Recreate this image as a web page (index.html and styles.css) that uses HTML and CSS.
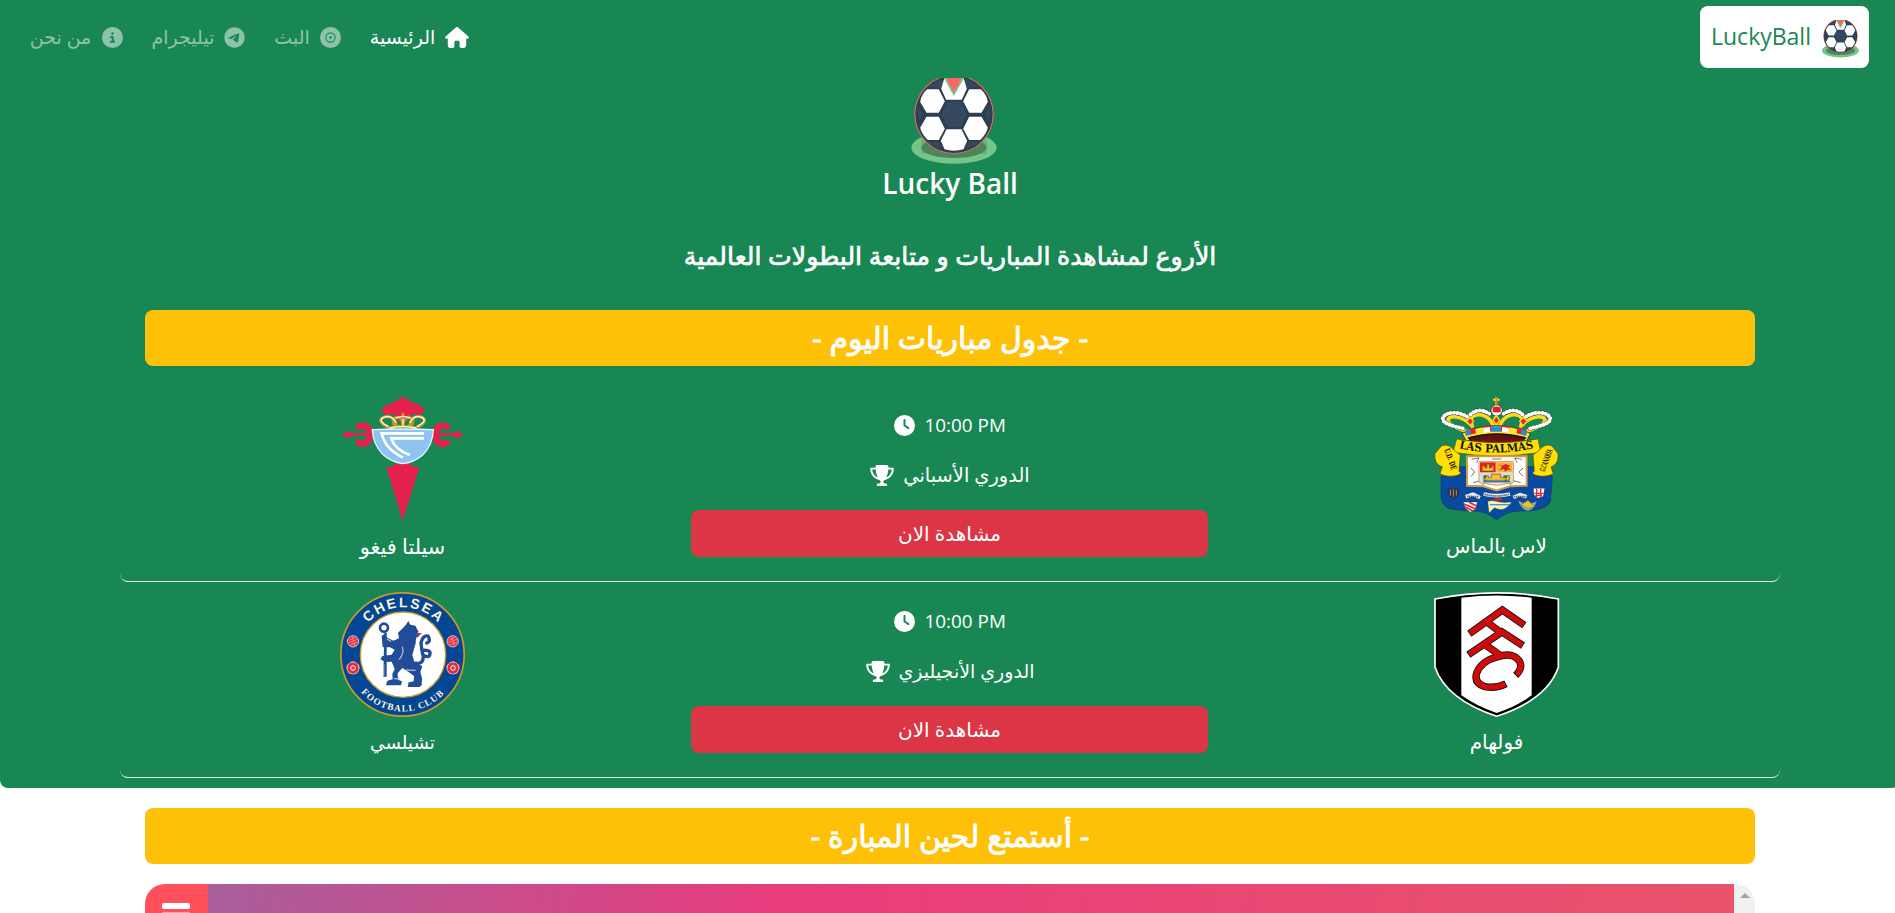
FILE: index.html
```html
<!DOCTYPE html>
<html lang="ar">
<head>
<meta charset="utf-8">
<title>LuckyBall</title>
<link rel="stylesheet" href="styles.css">
</head>
<body>
<svg class="defs" aria-hidden="true">
  <symbol id="ball" viewBox="155 54 257 258">
    <ellipse cx="283.500" cy="263" rx="128" ry="48.500" fill="#74c587"/>
    <ellipse cx="283.500" cy="263" rx="98" ry="31" fill="#4f8359"/>
    <circle cx="283.500" cy="163" r="119" fill="#ff6464"/>
    <path d="M186 230 Q283 300 381 230 L381 282 H186Z" fill="#4f8359" opacity=".3"/>
    <circle cx="283.500" cy="163" r="116" fill="#2c3e50"/>
    <path d="M177 140 190 163 177 187ZM390 140 377 163 390 187ZM205 80 243 58 252 66 241 84ZM362 80 324 58 315 66 326 84ZM207 246 241 246 248 266Q225 262 207 246ZM360 246 326 246 319 266Q342 262 360 246Z" fill="#34495e"/>
    <g fill="#fff">
      <path d="M203 88H238L256 124 238 158H201L182 125Q186 103 203 88ZM364 88H329L311 124 329 158H366L385 125Q381 103 364 88ZM201 170H238L256 206 238 240H205Q187 223 182 203ZM366 170H329L311 206 329 240H362Q380 223 385 203ZM261 208H306L323 242 312 268Q283 276 255 268L244 242ZM254 56H313L322 86 307 119H260L245 86Z"/>
    </g>
    <path d="M264 125H303L323 164 303 202H264L245 164Z" fill="#34495e"/>
    <path d="M250 48H317L283 108Z" fill="#74c587"/>
    <path d="M257 48H310L283 97Z" fill="#ff6464"/>
  </symbol>
  <symbol id="clock" viewBox="0 0 512 512"><path d="M256 0a256 256 0 1 1 0 512A256 256 0 1 1 256 0zM232 120V256c0 8 4 15.500 10.700 20l96 64c11 7.400 25.900 4.400 33.300-6.700s4.400-25.900-6.700-33.300L280 243.200V120c0-13.300-10.700-24-24-24s-24 10.700-24 24z"/></symbol>
  <symbol id="trophy" viewBox="0 0 576 512"><path d="M400 0H176c-26.500 0-48.100 21.800-47.100 48.200.2 5.300.4 10.600.7 15.800H24C10.700 64 0 74.700 0 88c0 92.600 33.500 157 78.500 200.700 44.300 43.100 98.300 64.800 138.100 75.800 23.400 6.500 39.400 26 39.400 45.600 0 20.900-17 37.900-37.900 37.900H192c-17.700 0-32 14.300-32 32s14.300 32 32 32H384c17.700 0 32-14.300 32-32s-14.300-32-32-32H357.900C337 448 320 431 320 410.100c0-19.600 15.900-39.200 39.400-45.600 39.900-11 93.900-32.700 138.200-75.800C542.500 245 576 180.600 576 88c0-13.300-10.700-24-24-24H446.400c.3-5.200.5-10.400.7-15.800C448.100 21.800 426.500 0 400 0zM48.900 112h84.400c9.100 90.100 29.200 150.300 51.900 190.600-24.900-11-50.800-26.500-73.200-48.300-32-31.100-58-76-63-142.300zM464.100 254.300c-22.400 21.800-48.300 37.300-73.200 48.300 22.700-40.300 42.800-100.500 51.900-190.600h84.400c-5.100 66.300-31.100 111.200-63 142.300z"/></symbol>
</svg>

<header class="hero">
  <nav class="nav">
    <ul class="menu">
      <li class="item about"><span class="label" dir="rtl">من نحن</span>
        <svg class="ico" viewBox="0 0 512 512"><path d="M256 512A256 256 0 1 0 256 0a256 256 0 1 0 0 512zM216 336h24V272H216c-13.300 0-24-10.700-24-24s10.700-24 24-24h48c13.300 0 24 10.700 24 24v88h8c13.300 0 24 10.700 24 24s-10.700 24-24 24H216c-13.300 0-24-10.700-24-24s10.700-24 24-24zm40-208a32 32 0 1 1 0 64 32 32 0 1 1 0-64z"/></svg></li>
      <li class="item tele"><span class="label" dir="rtl">تيليجرام</span>
        <svg class="ico" viewBox="0 0 496 512"><path d="M248 8C111 8 0 119 0 256S111 504 248 504 496 393 496 256 385 8 248 8zM363 176.700c-3.700 39.200-19.900 134.400-28.100 178.300-3.500 18.600-10.300 24.800-16.900 25.400-14.400 1.300-25.300-9.500-39.300-18.700-21.800-14.300-34.200-23.200-55.300-37.200-24.500-16.100-8.600-25 5.300-39.500 3.700-3.800 67.100-61.500 68.300-66.700.2-.7.300-3.100-1.200-4.400s-3.600-.8-5.100-.5q-3.300.7-104.600 69.100-14.800 10.200-26.900 9.900c-8.900-.2-25.900-5-38.600-9.100-15.500-5-27.900-7.700-26.800-16.300q.8-6.700 18.500-13.700 108.400-47.200 144.600-62.300c68.900-28.600 83.200-33.600 92.500-33.800 2.100 0 6.600.5 9.600 2.900a10.500 10.500 0 0 1 3.500 6.700A43.800 43.800 0 0 1 363 176.700z"/></svg></li>
      <li class="item live"><span class="label" dir="rtl">البث</span>
        <svg class="ico" viewBox="0 0 512 512"><path fill-rule="evenodd" d="M256 0a256 256 0 1 1 0 512A256 256 0 1 1 256 0zM256 130a126 126 0 1 0 0 252 126 126 0 1 0 0-252zM256 156a100 100 0 1 1 0 200 100 100 0 1 1 0-200zM256 224a32 32 0 1 0 0 64 32 32 0 1 0 0-64z"/></svg></li>
      <li class="item home active"><span class="label" dir="rtl">الرئيسية</span>
        <svg class="ico wide" viewBox="0 0 576 512"><path d="M575.800 255.500c0 18-15 32.100-32 32.100h-32l.7 160.200c0 35-27 64.200-62 64.200H392c-22.100 0-40-17.900-40-40V368c0-17.700-14.300-32-32-32H256c-17.700 0-32 14.300-32 32v104c0 22.100-17.900 40-40 40H128c-35 0-64-28-64-64V287.600H32c-18 0-32-14-32-32.100 0-9 3-17 10-24L266.400 8c7-7 15-8 22-8s15 2 21 7L564.800 231.500c8 7 12 15 11 24z"/></svg></li>
    </ul>
    <a class="brand"><span class="brand-name">LuckyBall</span><svg class="brand-ball" preserveAspectRatio="none"><use href="#ball"/></svg></a>
  </nav>

  <div class="intro">
    <svg class="intro-ball"><use href="#ball"/></svg>
    <h1>Lucky Ball</h1>
    <p class="tagline" dir="rtl"><span>الأروع لمشاهدة المباريات و متابعة البطولات العالمية</span></p>
  </div>

  <h2 class="banner today" dir="rtl"><span>- جدول مباريات اليوم -</span></h2>

  <section class="matches">
    <article class="match">
      <div class="team">
        <svg class="crest" viewBox="30 33 375 375">
          <g fill="#e5214e">
            <path d="M219 34Q241 53 270 60 288 74 279 84 268 96 247 83L246 96H191V83Q170 96 159 84 150 74 168 60 197 53 219 34Z"/>
            <g id="arm">
              <path d="M35 149 53 138 70 145H130V153H70L53 160Z"/>
              <path id="curl" d="M130 148Q126 114 101 112 78 112 75 127 80 137 92 134 103 129 108 137 111 145 100 147Z"/>
              <use href="#curl" transform="matrix(1 0 0 -1 0 298)"/>
            </g>
            <use href="#arm" transform="matrix(-1 0 0 1 436 0)"/>
            <path d="M169 247Q196 245 203 230H234Q241 245 268 247L218 408Z"/>
            <path d="M204 90H232V110H204Z"/>
          </g>
          <g fill="none" stroke-linecap="round">
            <g id="crown" stroke="#bd9a26" stroke-width="9"><path d="M176 128Q138 108 160 97 187 86 200 122M196 124Q180 100 204 97 218 101 219 122M260 128Q298 108 276 97 250 86 238 122M242 124Q258 100 234 97 220 101 219 122M176 129Q218 119 260 129M219 88V94"/></g>
            <path d="M174 124Q142 108 160 97 184 88 198 112M262 124Q294 108 276 97 252 88 240 112M198 99Q219 90 240 99M180 129Q219 121 257 129M219 102V120" stroke="#fff6d8" stroke-width="4"/>
          </g>
          <path d="M127 134Q219 130 310 134 308 181 278 210 251 233 218 236 184 232 158 208 129 177 127 134Z" fill="#8dc4f1" stroke="#e6f4ff" stroke-width="4"/>
          <g fill="none" stroke="#fff" stroke-width="8"><path d="M282 145H155Q164 191 219 218M282 160H184Q193 192 239 210"/></g>
        </svg>
        <div class="name celta" dir="rtl"><span>سيلتا فيغو</span></div>
      </div>
      <div class="info">
        <div class="line"><svg class="ico"><use href="#clock"/></svg><span class="time">10:00 PM</span></div>
        <div class="line"><svg class="ico wide"><use href="#trophy"/></svg><span class="label liga" dir="rtl">الدوري الأسباني</span></div>
        <a class="watch" dir="rtl"><span>مشاهدة الان</span></a>
      </div>
      <div class="team">
        <svg class="crest" viewBox="42 33 375 375">
          <path d="M63 275V337Q70 375 108 374 137 378 157 378 197 376 230 405 260 376 305 378 373 380 391 350L397 275 375 245H85Z" fill="#084aa0" stroke="#123867" stroke-width="2"/>
          <g fill="none" stroke="#ffd91e" stroke-width="11"><path d="M142 140C112 130 84 118 84 104 88 90 124 92 152 118M158 128Q140 84 186 90 214 98 221 128M317 140C347 130 375 118 375 104 371 90 335 92 307 118M301 128Q319 84 273 90 245 98 238 128M229 90V132"/></g>
          <g fill="none" stroke-linecap="round">
            <path d="M128 130C92 122 68 114 68 101 74 78 118 78 142 96M152 88Q176 66 208 86M331 130C367 122 391 114 391 101 385 78 341 78 317 96M307 88Q283 66 251 86" stroke="#333" stroke-width="14" stroke-dasharray=".1 10"/>
            <path d="M128 130C92 122 68 114 68 101 74 78 118 78 142 96M152 88Q176 66 208 86M331 130C367 122 391 114 391 101 385 78 341 78 317 96M307 88Q283 66 251 86" stroke="#fff" stroke-width="12" stroke-dasharray=".1 10"/>
          </g>
          <circle cx="230" cy="76" r="17" fill="#fff" stroke="#111" stroke-width="2"/><path d="M218 65H242V82H218Z" fill="#df2028"/><path d="M229 36V66M219 44H239" stroke="#ffd91e" stroke-width="6"/><path d="M229 37V64" stroke="#df2028" stroke-width="2"/>
          <g fill="#e22e27" stroke="#ffd91e" stroke-width="4"><path d="M150 96 161 109 151 122 140 109ZM229 92 239 106 229 119 219 106ZM310 96 321 109 310 122 299 109Z"/></g>
          <path d="M126 145Q229 98 331 145L320 168Q229 140 139 168Z" fill="#ffe22a" stroke="#111" stroke-width="2"/>
          <path d="M140 143Q229 117 320 143" fill="none" stroke="#e82028" stroke-width="17" stroke-dasharray="27 24"/>
          <path d="M213 124H243V140H213ZM134 139 150 132 154 147 138 153ZM306 132 322 139 318 153 302 147Z" fill="#278ed4"/>
          <path d="M190 128 210 126V140L190 143ZM246 126 267 129V143L246 140Z" fill="#fff"/>
          <path d="M146 159Q229 135 316 159L301 173H158Z" fill="#760d10" stroke="#17100b" stroke-width="4"/>
          <path d="M153 158H311" stroke="#222" stroke-width="10" stroke-dasharray="2 4"/>
          <path d="M110 162Q230 184 354 162L362 202Q230 224 99 202Z" fill="#ffe000" stroke="#5b5312" stroke-width="2"/>
          <path d="M64 183Q86 174 101 195L121 210 117 259Q129 263 115 270 87 279 60 267L67 246Q41 238 45 206ZM396 183Q374 174 359 195L339 210 343 259Q331 263 345 270 373 279 400 267L393 246Q417 238 414 206Z" fill="#ffe000" stroke="#4d4814" stroke-width="2"/>
          <path id="palm-arc" d="M117 190Q228 216 349 188" fill="none"/>
          <text class="palm-text"><textPath href="#palm-arc" textLength="226" lengthAdjust="spacingAndGlyphs">LAS PALMAS</textPath></text>
          <text class="side-text" transform="translate(72 194) rotate(70)" textLength="66" lengthAdjust="spacingAndGlyphs">U.D. DE</text>
          <text class="side-text" transform="translate(374 262) rotate(-70)" textLength="70" lengthAdjust="spacingAndGlyphs">G.CANARIA</text>
          <path d="M141 214H320V302L270 304 230 316 190 304 141 302Z" fill="#fff" stroke="#d39b4c" stroke-width="6"/>
          <g fill="none" stroke="#333" stroke-width="2"><path d="M155 223 177 219 170 233M306 223 284 219 292 233M153 249 164 261 153 274M309 249 297 261 309 274M159 293 180 287 190 300M302 293 281 287 270 300M216 222H244"/></g>
          <path d="M177 230H280V293L230 301 177 293Z" fill="#f7e5ce" stroke="#d39b4c" stroke-width="3"/>
          <path d="M180 232H227V262H180Z" fill="#ec2020"/><path d="M229 232H277V262H229Z" fill="#f6b22d"/>
          <path d="M187 258V242H194V248H201V238H208V248H215V242H221V258Z" fill="#edc323" stroke="#3b2214" stroke-width="1"/>
          <path d="M236 238 246 243 257 237 271 242 264 248 275 255 263 254 255 260 252 252 237 256 246 247Z" fill="#d72020"/>
          <path d="M181 265H276V291H181Z" fill="#c3e2ed"/><path d="M192 286V272H205V278H214V267H242V278H251V272H268V286Z" fill="#f5c02c" stroke="#674916" stroke-width="2"/><path d="M195 273V287M257 273V287" stroke="#386b24" stroke-width="8" stroke-dasharray="7 4"/><path d="M190 290H270" stroke="#3275ba" stroke-width="5"/>
          <g stroke="#222" stroke-width="1"><path d="M85 311H115V330L100 341 85 330Z" fill="#333"/><path d="M91 314V332M100 312V337M109 314V332" stroke="#efb4af" stroke-width="2"/><path d="M340 310H374L370 334 354 340 342 330Z" fill="#fff"/><path d="M344 325H370M346 331H366M350 311V338M362 311V338" stroke="#e32339" stroke-width="4"/><path d="M130 351H172L166 372 151 382 136 370Z" fill="#fff"/><path d="M132 357 167 372M135 366 159 378M147 352 170 363" stroke="#e32339" stroke-width="5"/><path d="M203 349Q218 344 230 349T276 351L262 366Q245 380 224 368L207 384Z" fill="#fff1af"/><path d="M209 359H268" stroke="#35a0cf" stroke-width="4"/><path d="M219 347H249L244 340H224Z" fill="#e22e27"/><path d="M294 346Q318 362 351 349 343 375 324 378 302 374 294 346Z" fill="#7ab4da"/><path d="M302 359 324 346 345 365 324 371Z" fill="#eac02b"/></g>
          <path d="M137 335 159 328 180 338M191 327Q230 337 270 327M280 337 300 329 320 335" fill="none" stroke="#eee" stroke-width="11"/>
          <path d="M142 334 177 335M194 328Q230 338 267 328M283 335H316" fill="none" stroke="#222" stroke-width="5" stroke-dasharray="3 3"/>
        </svg>
        <div class="name palmas" dir="rtl"><span>لاس بالماس</span></div>
      </div>
    </article>

    <article class="match">
      <div class="team">
        <svg class="crest" viewBox="30 36 375 375">
          <circle cx="217.500" cy="223.500" r="185" fill="#034694" stroke="#c99c25" stroke-width="5"/>
          <circle cx="219" cy="224" r="128" fill="#fff" stroke="#c99c25" stroke-width="4"/>
          <path id="top-arc" d="M114 129A141 141 0 0 1 328 133" fill="none"/>
          <path id="bottom-arc" d="M93 337A168 168 0 0 0 346 337" fill="none"/>
          <text class="chel-top"><textPath href="#top-arc" textLength="236" lengthAdjust="spacing">CHELSEA</textPath></text>
          <text class="chel-bottom"><textPath href="#bottom-arc" textLength="280" lengthAdjust="spacing">FOOTBALL CLUB</textPath></text>
          <g fill="#e72d3b" stroke="#fff" stroke-width="2"><circle cx="69" cy="184" r="17"/><circle cx="368" cy="184" r="17"/></g>
          <path d="M57 181 77 171M56 188 82 178M60 195 83 186M356 181 376 171M355 188 381 178M359 195 382 186M66 170 75 200M365 170 374 200" stroke="#f7b7bd" stroke-width="2"/>
          <g fill="#e72d3b"><g id="rose"><circle cx="69" cy="251" r="8"/><circle cx="82" cy="260" r="8"/><circle cx="77" cy="274" r="8"/><circle cx="61" cy="274" r="8"/><circle cx="56" cy="260" r="8"/><circle cx="69" cy="264" r="7" stroke="#fff" stroke-width="3"/></g><use href="#rose" x="300"/></g>
          <circle cx="69" cy="264" r="18" fill="none" stroke="#fff" stroke-width="2"/><circle cx="369" cy="264" r="18" fill="none" stroke="#fff" stroke-width="2"/>
          <g fill="#234c98">
            <path d="M163 158H170V290H160Z"/><path d="M216 147 228 134 235 123 241 134 256 137 266 156 260 161 269 167 258 174 257 190 252 207 247 226 253 245 277 259 271 276 276 294 275 316 268 321H233L236 307 251 304 252 288 239 278 217 264 203 280 204 299 216 304 213 316H168L172 302 188 298 187 282 194 267 185 245 166 246 151 238 157 228 185 224 194 209 180 202 158 202 155 169 163 161 172 173 190 182 207 175 204 158Z"/>
          </g>
          <circle cx="162" cy="143" r="12" fill="none" stroke="#234c98" stroke-width="8"/>
          <path d="M252 249Q278 256 280 231 274 207 273 188 279 164 294 168 305 187 286 190M276 211Q302 209 300 221 298 236 279 225" fill="none" stroke="#234c98" stroke-width="10"/>
          <path d="M207 239Q224 219 217 200M226 270 257 271M191 296 208 297M171 177 183 184M161 253V287" fill="none" stroke="#a8b6d8" stroke-width="4"/>
          <path d="M260 159H276L270 165H263Z" fill="#ed1c35"/>
        </svg>
        <div class="name chelsea" dir="rtl"><span>تشيلسي</span></div>
      </div>
      <div class="info">
        <div class="line"><svg class="ico"><use href="#clock"/></svg><span class="time">10:00 PM</span></div>
        <div class="line"><svg class="ico wide"><use href="#trophy"/></svg><span class="label premier" dir="rtl">الدوري الأنجيليزي</span></div>
        <a class="watch" dir="rtl"><span>مشاهدة الان</span></a>
      </div>
      <div class="team">
        <svg class="crest" viewBox="42 36 375 375">
          <path d="M45 57Q230 20 415 57V262Q382 359 230 409 79 359 45 262Z" fill="#000" stroke="#fff" stroke-width="5"/>
          <path d="M124 53Q230 40 335 53V346Q292 379 230 399 170 379 124 346Z" fill="#fff"/>
          <g fill="none" stroke="#111" stroke-width="22"><path d="M148 161 247 90 313 136M195 122 246 160M145 224 246 156 309 197M190 190 246 230"/><path d="M287 286Q310 263 298 243 278 215 231 231 184 243 170 279 161 310 195 320 229 326 258 311"/></g>
          <g fill="none" stroke="#ce0b0b" stroke-width="17"><path d="M150 160 247 90 311 135M195 122 246 160M147 223 246 156 307 196M190 190 246 230"/><path d="M289 284Q310 263 298 243 278 215 231 231 184 243 170 279 161 310 195 320 229 326 256 312"/></g>
        </svg>
        <div class="name fulham" dir="rtl"><span>فولهام</span></div>
      </div>
    </article>
  </section>
</header>

<main class="below">
  <h2 class="banner enjoy" dir="rtl"><span>- أستمتع لحين المبارة -</span></h2>
  <div class="frame">
    <div class="burger"><i></i><i></i></div>
    <div class="stage"></div>
    <div class="scroll"></div>
  </div>
</main>
</body>
</html>
```
FILE: styles.css
```css
* { box-sizing: border-box; }
html { height: 100%; overflow: hidden; }
body {
  margin: 0;
  width: 1900px;
  height: 100%;
  overflow: hidden;
  background: #fff;
  color: #fff;
  font: 20px/30px "Open Sans", "Noto Sans", "DejaVu Sans", sans-serif;
}
h1, h2, p, ul { margin: 0; padding: 0; }
.defs { display: none; }

.hero {
  height: 788px;
  background: #198754;
  border-radius: 0 0 8px 8px;
}
.nav {
  display: flex;
  justify-content: space-between;
  height: 74px;
  padding: 6px 31px 0 30px;
}
.menu { display: flex; list-style: none; height: 62px; align-items: center; gap: 30px; }
.item { display: flex; align-items: center; gap: 11px; opacity: .5; }
.item.active { opacity: 1; }
.label { display: flex; justify-content: center; white-space: nowrap; }
.item .label { font-size: 19px; }
.about .label { width: 61px; }
.tele .label { width: 60px; }
.live .label { width: 34px; }
.home .label { width: 63px; }
.ico { width: 21px; height: 21px; fill: #fff; flex: none; }
.ico.wide { width: 24px; }

.brand {
  display: flex;
  align-items: center;
  width: 169px;
  height: 62px;
  padding: 0 10px 0 11px;
  justify-content: space-between;
  background: #fff;
  border-radius: 8px;
  color: #198754;
}
.brand-name { font-size: 23px; line-height: 36px; padding-bottom: 2px; }
.brand-ball { width: 37px; height: 38px; margin-top: 3px; }

.intro { display: flex; flex-direction: column; align-items: center; padding-top: 4px; height: 236px; }
.intro-ball { width: 86px; height: 86px; margin-left: 8px; }
.intro h1 { font-size: 28px; line-height: 38px; font-weight: 600; }
.tagline {
  margin-top: 35px;
  font-size: 25.2px;
  line-height: 36px;
  white-space: nowrap;
  -webkit-text-stroke: .7px #fff;
}

.banner {
  display: flex;
  justify-content: center;
  align-items: center;
  width: 1610px;
  height: 56px;
  margin: 0 auto;
  background: #ffc107;
  border-radius: 8px;
  font-size: 30px;
  font-weight: 400;
  white-space: nowrap;
  -webkit-text-stroke: .9px #fff;
}
.matches { width: 1660px; margin: 20px auto 0; }
.match {
  display: grid;
  grid-template-columns: repeat(3, 1fr);
  height: 196px;
  padding: 10px 10px 0 9px;
  border-bottom: 1px solid #e6f2ec;
  border-radius: 0 0 8px 8px;
}
.team { display: flex; flex-direction: column; align-items: center; }
.crest { width: 125px; height: 125px; flex: none; overflow: visible; }
.name { margin-top: 10px; white-space: nowrap; }
.celta { font-size: 20.8px; }
.chelsea { font-size: 18.4px; }
.info { display: flex; flex-direction: column; padding: 4px 15px 0; }
.line { display: flex; align-items: center; justify-content: center; gap: 10px; height: 50px; }
.time { width: 81px; font-size: 18.9px; white-space: nowrap; }
.liga { width: 126px; font-size: 19.4px; }
.premier { width: 134px; font-size: 19px; }
.watch {
  display: flex;
  align-items: center;
  justify-content: center;
  height: 47px;
  margin-top: 10px;
  background: #dc3545;
  border-radius: 8px;
}
.palm-text { font: 700 34px "DejaVu Serif", serif; fill: #111; }
.side-text { font: 700 24px "DejaVu Serif", serif; fill: #111; }
.chel-top { font: 700 42px "Liberation Sans", sans-serif; fill: #fff4d6; }
.chel-bottom { font: 700 28px "Liberation Serif", serif; fill: #fff4d6; }

.below { padding-top: 20px; }
.frame {
  display: flex;
  width: 1610px;
  height: 29px;
  margin: 20px auto 0;
  border-radius: 20px 20px 0 0;
  overflow: hidden;
}
.burger {
  display: flex;
  flex-direction: column;
  align-items: center;
  gap: 4px;
  width: 63px;
  height: 29px;
  padding: 19px 1px 0 0;
  background: #ff505b;
}
.burger i { width: 28px; height: 6px; flex: none; background: #fff; border-radius: 2px; }
.burger i + i { height: 1px; margin-top: -1px; background: #ffa0a6; border-radius: 0; }
.stage { flex: 1; background: linear-gradient(100deg, #a85e9b 0%, #e93c7c 38%, #e9546b 100%); }
.scroll { width: 21px; background: #f1f1f1; }
.scroll::before {
  content: "";
  display: block;
  margin: 9px auto 0 6px;
  width: 0;
  border: 5px solid transparent;
  border-top: 0;
  border-bottom-color: #a3a3a3;
}
```
